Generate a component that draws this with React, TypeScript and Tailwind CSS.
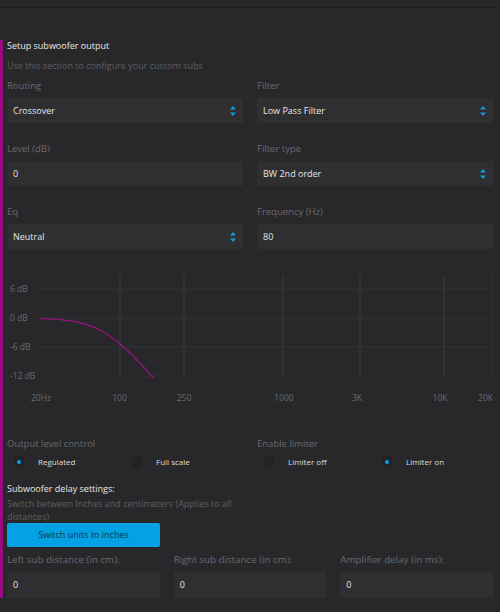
import React from "react";

const Arrows = () => (
  <svg width="6" height="10" viewBox="0 0 6 10" className="shrink-0">
    <path d="M3 0 L6 3.5 L0 3.5 Z" fill="#0a9ee0" />
    <path d="M3 10 L6 6.5 L0 6.5 Z" fill="#0a9ee0" />
  </svg>
);

const Label = ({ children, size = "text-[9.5px]" }: { children: React.ReactNode; size?: string }) => (
  <div className={`${size} leading-[12px] text-[#69696c]`}>{children}</div>
);

const Select = ({ value }: { value: string }) => (
  <div className="mt-[6px] h-[25px] bg-[#2f2f32] flex items-center justify-between pl-[6px] pr-[7px] text-[9px] text-[#e6e6e6]">
    <span>{value}</span>
    <Arrows />
  </div>
);

const Input = ({ value, h = "h-[25px]" }: { value: string; h?: string }) => (
  <div className={`mt-[6px] ${h} bg-[#2f2f32] flex items-center pl-[6px] text-[9px] text-[#e6e6e6]`}>
    {value}
  </div>
);

const Radio = ({ label, on }: { label: string; on?: boolean }) => (
  <div className="w-[118px] flex items-center h-[12px]">
    <div className="ml-[6px] w-[12px] h-[12px] rounded-full bg-[#222225] flex items-center justify-center">
      {on && <div className="w-[4px] h-[4px] rounded-full bg-[#0aa3e8]" />}
    </div>
    <span className="ml-[13px] text-[8px] text-[#dedede]">{label}</span>
  </div>
);

function Chart() {
  const xp = (f: number) => 120 + 162 * Math.log10(f / 100) - 7;
  const yp = (db: number) => 318 - 4.83 * db - 260;
  const pts: string[] = [];
  for (let i = 0; i <= 60; i++) {
    const f = 32 * Math.pow(161 / 32, i / 60);
    const r = f / 80;
    const db = -10 * Math.log10(1 + Math.pow(r, 4));
    pts.push(`${xp(f).toFixed(2)},${yp(db).toFixed(2)}`);
  }
  const d = "M" + pts.join(" L");
  const hy = [29, 58, 87, 116];
  const vx = [113, 177, 276, 353, 437, 486];
  const yl = ["6 dB", "0 dB", "-6 dB", "-12 dB"];
  const xl: [string, number, "middle" | "end"][] = [
    ["20Hz", 34, "middle"],
    ["100", 112.5, "middle"],
    ["250", 177, "middle"],
    ["1000", 277, "middle"],
    ["3K", 350, "middle"],
    ["10K", 433, "middle"],
    ["20K", 486, "end"],
  ];
  return (
    <svg width="486" height="150" viewBox="0 0 486 150" className="mt-[11px] block" style={{ fontFamily: "'Open Sans', sans-serif" }}>
      {hy.map((y) => (
        <line key={y} x1="33" x2="486" y1={y} y2={y} stroke="#323235" strokeWidth="1" />
      ))}
      {vx.map((x) => (
        <line key={x} x1={x} x2={x} y1="15" y2="116" stroke="#3a3a3d" strokeWidth="1" />
      ))}
      {yl.map((t, i) => (
        <text key={t} x="3" y={hy[i] + 3} fontSize="8.5" fill="#6a6a6d">
          {t}
        </text>
      ))}
      {xl.map(([t, x, a]) => (
        <text key={t} x={x} y="141" fontSize="8.5" fill="#6a6a6d" textAnchor={a}>
          {t}
        </text>
      ))}
      <path d={d} fill="none" stroke="#9c1186" strokeWidth="1.2" />
    </svg>
  );
}

export default function App() {
  return (
    <div className="w-[500px] h-[612px] bg-[#28282b] overflow-hidden font-['Open_Sans',sans-serif]">
      <div className="h-[7px]" />
      <div className="h-px bg-[#1f1f21]" />
      <div className="mt-[32px] border-l-[3px] border-[#9a0a80] pl-[4px] pr-[7px]">
        <div className="text-[9px] leading-[12px] text-[#e8e8e8]">Setup subwoofer output</div>
        <div className="mt-[8px] text-[9px] leading-[12px] text-[#5f5f62]">Use this section to configure your custom subs</div>
        <div className="mt-[8px] grid grid-cols-2 gap-x-[14px] gap-y-[20px]">
          <div>
            <Label>Routing</Label>
            <Select value="Crossover" />
          </div>
          <div>
            <Label>Filter</Label>
            <Select value="Low Pass Filter" />
          </div>
          <div>
            <Label>Level (dB)</Label>
            <Input value="0" />
          </div>
          <div>
            <Label>Filter type</Label>
            <Select value="BW 2nd order" />
          </div>
          <div>
            <Label>Eq</Label>
            <Select value="Neutral" />
          </div>
          <div>
            <Label>Frequency (Hz)</Label>
            <Input value="80" />
          </div>
        </div>
        <Chart />
        <div className="mt-[28px] grid grid-cols-2 gap-x-[14px]">
          <div>
            <Label>Output level control</Label>
            <div className="mt-[6px] flex">
              <Radio label="Regulated" on />
              <Radio label="Full scale" />
            </div>
          </div>
          <div>
            <Label>Enable limiter</Label>
            <div className="mt-[6px] flex">
              <Radio label="Limiter off" />
              <Radio label="Limiter on" on />
            </div>
          </div>
        </div>
        <div className="mt-[15px] text-[9px] leading-[12px] text-[#e8e8e8]">Subwoofer delay settings:</div>
        <div className="mt-[2px] w-[236px] text-[9px] leading-[13px] text-[#5f5f62]">
          Switch between Inches and centimeters (Applies to all distances)
        </div>
        <div className="w-[153px] h-[24px] bg-[#02a2e4] rounded-[2px] flex items-center justify-center text-[9px] text-[#16344c]">
          Switch units to inches
        </div>
        <div className="mt-[7px] grid grid-cols-3 gap-x-[14px]">
          <div>
            <Label size="text-[9.75px]">Left sub distance (in cm):</Label>
            <Input value="0" h="h-[26px]" />
          </div>
          <div>
            <Label size="text-[9.75px]">Right sub distance (in cm):</Label>
            <Input value="0" h="h-[26px]" />
          </div>
          <div>
            <Label size="text-[9.75px]">Amplifier delay (in ms):</Label>
            <Input value="0" h="h-[26px]" />
          </div>
        </div>
      </div>
    </div>
  );
}
